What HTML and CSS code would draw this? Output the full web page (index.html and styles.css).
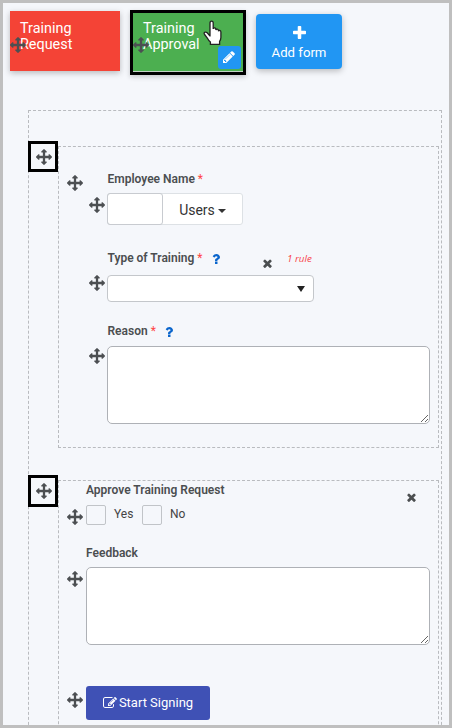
FILE: index.html
```html
<!DOCTYPE html>
<html lang="en">
<head>
<meta charset="utf-8">
<title>Form builder</title>
<link rel="stylesheet" href="styles.css">
</head>
<body>
<svg class="defs" width="0" height="0">
  <symbol id="move" viewBox="0 0 1792 1792"><path d="M1792 896q0 26-19 45l-256 256q-19 19-45 19t-45-19-19-45v-128h-384v384h128q26 0 45 19t19 45-19 45l-256 256q-19 19-45 19t-45-19l-256-256q-19-19-19-45t19-45 45-19h128v-384h-384v128q0 26-19 45t-45 19-45-19l-256-256q-19-19-19-45t19-45l256-256q19-19 45-19t45 19 19 45v128h384v-384h-128q-26 0-45-19t-19-45 19-45l256-256q19-19 45-19t45 19l256 256q19 19 19 45t-19 45-45 19h-128v384h384v-128q0-26 19-45t45-19 45 19l256 256q19 19 19 45z"/></symbol>
  <symbol id="times" viewBox="302 302 1188 1252"><path d="M1490 1322q0 40-28 68l-136 136q-28 28-68 28t-68-28l-294-294-294 294q-28 28-68 28t-68-28l-136-136q-28-28-28-68t28-68l294-294-294-294q-28-28-28-68t28-68l136-136q28-28 68-28t68 28l294 294 294-294q28-28 68-28t68 28l136 136q28 28 28 68t-28 68l-294 294 294 294q28 28 28 68z"/></symbol>
  <symbol id="question" viewBox="380 256 1030 1280"><path d="M1088 1256v240q0 16-12 28t-28 12h-240q-16 0-28-12t-12-28v-240q0-16 12-28t28-12h240q16 0 28 12t12 28zm316-600q0 54-15.5 101t-35 76.5-55 59.5-57.5 43.5-61 35.5q-41 23-68.5 65t-27.5 67q0 17-12 32.5t-28 15.5h-240q-15 0-25.5-18.5t-10.5-37.5v-45q0-83 65-156.5t143-108.5q59-27 84-56t25-76q0-42-46.5-74t-107.5-32q-65 0-108 29-35 25-107 115-13 16-31 16-12 0-25-8l-164-125q-13-10-15.5-25t5.5-28q160-266 464-266 80 0 161 31t146 83 106 127.5 41 158.5z"/></symbol>
</svg>
<div class="page">
  <header class="tabs">
    <div class="tab tab-red">
      Training<br>Request
      <svg class="icon-move tab-move"><use href="#move"/></svg>
    </div>
    <div class="tab-selected">
      <div class="tab tab-green">
        Training<br>Approval
        <svg class="icon-move tab-move"><use href="#move"/></svg>
        <span class="edit"><svg viewBox="0 0 1792 1792" width="14" height="14"><path d="M491 1536l91-91-235-235-91 91v107h128v128h107zm523-928q0-22-22-22-10 0-17 7l-542 542q-7 7-7 17 0 22 22 22 10 0 17-7l542-542q7-7 7-17zm-54-192l416 416-832 832h-416v-416zm683 96q0 53-37 90l-166 166-416-416 166-165q36-38 90-38 53 0 91 38l235 234q37 39 37 91z"/></svg></span>
        <svg class="cursor" viewBox="0 0 19 26"><path d="M7 16.5V3.2Q7 1.2 8.6 1.2T10.2 3.2V9Q10.4 7.8 11.6 7.9T12.9 9.4V10Q13.2 8.9 14.3 9.1T15.5 10.6V11.2Q15.8 10.2 16.8 10.4T17.9 12V17.5Q17.9 19.5 16.6 21.3V24.4H7.4V22Q5.5 20.5 4.3 18L1.6 14.5Q.6 13 1.7 12.3T4.2 12.8L7 16Z"/></svg>
      </div>
    </div>
    <div class="add">
      <svg viewBox="192 128 1408 1408" width="13" height="13"><path d="M1600 736v192q0 40-28 68t-68 28h-416v416q0 40-28 68t-68 28h-192q-40 0-68-28t-28-68v-416h-416q-40 0-68-28t-28-68v-192q0-40 28-68t68-28h416v-416q0-40 28-68t68-28h192q40 0 68 28t28 68v416h416q40 0 68 28t28 68z"/></svg>
      <span>Add form</span>
    </div>
  </header>
  <main class="canvas">
    <section class="section first">
      <div class="grip"><svg class="icon-move"><use href="#move"/></svg></div>
      <div class="panel">
        <svg class="icon-move panel-move"><use href="#move"/></svg>
        <div class="fields">
          <div class="field employee">
            <div class="label">Employee Name <b class="req">*</b></div>
            <div class="row">
              <svg class="icon-move"><use href="#move"/></svg>
              <div class="picker"><span class="picker-input"></span><span class="picker-button">Users <i class="caret"></i></span></div>
            </div>
          </div>
          <div class="field type">
            <div class="label">Type of Training <b class="req">*</b> <svg class="help"><use href="#question"/></svg>
              <svg class="close"><use href="#times"/></svg><em class="rule">1 rule</em></div>
            <div class="row">
              <svg class="icon-move"><use href="#move"/></svg>
              <div class="select"><i class="arrow"></i></div>
            </div>
          </div>
          <div class="field reason">
            <div class="label">Reason <b class="req">*</b> <svg class="help"><use href="#question"/></svg></div>
            <div class="row">
              <svg class="icon-move"><use href="#move"/></svg>
              <textarea class="area"></textarea>
            </div>
          </div>
        </div>
      </div>
    </section>
    <section class="section second">
      <div class="grip"><svg class="icon-move"><use href="#move"/></svg></div>
      <div class="panel">
        <div class="fields">
          <div class="field approve">
            <div class="label">Approve Training Request <svg class="close"><use href="#times"/></svg></div>
            <div class="row">
              <svg class="icon-move"><use href="#move"/></svg>
              <div class="options">
                <span class="check"></span><span class="yes">Yes</span>
                <span class="check"></span><span>No</span>
              </div>
            </div>
          </div>
          <div class="field feedback">
            <div class="label">Feedback</div>
            <div class="row">
              <svg class="icon-move"><use href="#move"/></svg>
              <textarea class="area"></textarea>
            </div>
          </div>
          <div class="field sign">
            <div class="row">
              <svg class="icon-move"><use href="#move"/></svg>
              <div class="button"><svg viewBox="0 0 1792 1792" width="14" height="14"><path d="M888 1184l116-116-152-152-116 116v56h96v96h56zm440-720q-16-16-33 1l-350 350q-17 17-1 33t33-1l350-350q17-17 1-33zm80 594v190q0 119-84.5 203.5t-203.5 84.5h-832q-119 0-203.5-84.5t-84.5-203.5v-832q0-119 84.5-203.5t203.5-84.5h832q63 0 117 25 15 7 18 23 3 17-9 29l-49 49q-14 14-32 8-23-6-45-6h-832q-66 0-113 47t-47 113v832q0 66 47 113t113 47h832q66 0 113-47t47-113v-126q0-13 9-22l64-64q15-15 35-7t20 29zm-96-738l288 288-672 672h-288v-288zm444 132l-92 92-288-288 92-92q28-28 68-28t68 28l152 152q28 28 28 68t-28 68z"/></svg><span>Start Signing</span></div>
            </div>
          </div>
        </div>
      </div>
    </section>
  </main>
</div>
</body>
</html>
```
FILE: styles.css
```css
* { box-sizing: border-box; }
body { margin: 0; font-family: Roboto, "Liberation Sans", sans-serif; color: #444; }
svg { display: block; flex: none; fill: currentColor; }
.defs { position: absolute; }
.page { height: 728px; border: 3px solid #bfbfbf; background: #f5f7fb; overflow: hidden; }

.tabs { display: flex; align-items: flex-start; height: 107px; padding: 7px 0 0 7px; }
.tab { position: relative; width: 110px; padding: 10px 10px 0; color: #fff; font-size: 14.4px; line-height: 16px; }
.tab-red { height: 60px; margin-top: 1px; background: #f44336; box-shadow: 0 2px 6px rgba(0,0,0,.25); }
.tab-selected { width: 116px; height: 65px; margin-left: 10px; border: 3px solid #000; background: #c3d2c5; box-shadow: 0 2px 5px rgba(0,0,0,.2); }
.tab-green { height: 58px; padding-top: 8px; background: #4caf50; }
.icon-move { width: 16px; height: 16px; color: #4c4f52; }
.tab-move { position: absolute; left: 0; top: 26px; }
.tab-green .tab-move { top: 24px; }
.edit { position: absolute; right: 2px; bottom: 2px; width: 23px; height: 23px; border-radius: 3px; background: #2196f3; display: flex; align-items: center; justify-content: center; }
.edit svg { margin: -1px 0 0 -1px; }
.cursor { position: absolute; left: 70px; top: 7px; width: 19px; height: 26px; fill: #fff; stroke: #222; stroke-width: 1.3; }
.add { display: flex; flex-direction: column; align-items: center; width: 86px; height: 55px; margin: 4px 0 0 10px; padding-top: 12px; gap: 5px; border-radius: 4px; background: #2196f3; color: #fff; font-size: 13.2px; line-height: 17px; box-shadow: 0 2px 6px rgba(0,0,0,.25); }

.canvas { width: 414px; height: 640px; margin-left: 25px; border: 1px dashed #b9bbbf; }
.section { display: flex; align-items: flex-start; margin: 30px 0 0 -1px; }
.grip { width: 30px; height: 31px; border: 3px solid #000; display: flex; align-items: center; justify-content: center; padding-left: 2px; }
.panel { display: flex; align-items: flex-start; width: 381px; height: 302px; margin-top: 5px; border: 1px dashed #b9bbbf; }
.panel-move { margin: 28px 0 0 8px; }
.second { margin-top: 27px; }
.second .grip { height: 32px; }
.second .panel { height: 400px; }
.fields { flex: 1; }
.first .fields { margin-left: 5px; padding-top: 25px; }
.label { display: flex; align-items: center; height: 14px; font-size: 12px; font-weight: 600; line-height: 14px; color: #4b4e50; white-space: pre; }
.first .label { padding-left: 19.5px; }
.second .label { padding-left: 27px; }
.row { display: flex; align-items: flex-start; }
.first .row { gap: 2.5px; padding-left: .5px; }
.second .row { gap: 3px; padding-left: 8px; }
.req { color: #f44; font-weight: 400; }
.help { width: 8px; height: 10px; margin: 2px 0 0 9.5px; color: #0a65cc; }
.close { width: 9px; height: 9px; }
.rule { margin-left: 14.5px; color: #f8424a; font: italic 9.8px "Open Sans", sans-serif; }

.picker { display: flex; width: 136px; height: 32px; border: 1px solid #dde1e5; border-radius: 3px; background: #fff; }
.picker-input { width: 56px; margin: -1px; border: 1px solid #c8cbd0; border-radius: 3px; }
.picker-button { display: flex; align-items: center; justify-content: center; flex: 1; gap: 3px; padding: 2px 0 0 1px; color: #333; font-size: 14px; }
.caret { border: 4px solid transparent; border-top-color: #333; border-bottom: 0; margin-top: 1px; }
.select { display: flex; align-items: center; justify-content: flex-end; width: 207px; height: 27px; padding-right: 8px; border: 1px solid #c4c7cb; border-radius: 4px; background: #fff; }
.arrow { border: 4px solid transparent; border-top: 6px solid #222; border-bottom: 0; }
.area { display: block; width: 323px; height: 78px; margin: 0; border: 1px solid #aeb1b6; border-radius: 5px; background: #fff; resize: vertical; outline: 0; }

.employee .row { margin-top: 7px; }
.employee .icon-move { margin-top: 4px; }
.type { margin-top: 26px; }
.type .close { margin: 11px 0 0 43.5px; }
.type .row { margin-top: 10px; }
.reason { margin-top: 22px; }
.reason .row { margin-top: 8px; }
.reason .icon-move { margin-top: 2px; }
.approve { padding-top: 2px; }
.approve .close { margin: 15px 22px 0 auto; }
.approve .row { margin-top: 8px; }
.approve .icon-move { margin-top: 4px; }
.options { display: flex; font-size: 12px; line-height: 18px; }
.check { width: 20px; height: 20px; margin-right: 8px; border: 1px solid #c1c4c8; border-radius: 2px; }
.yes { width: 28px; }
.feedback { margin-top: 21px; }
.feedback .row { margin-top: 7px; }
.feedback .icon-move { margin-top: 4px; }
.second .area { width: 344px; }
.sign { margin-top: 41px; }
.sign .icon-move { margin-top: 6px; }
.button { display: flex; align-items: center; justify-content: center; gap: 2px; width: 124px; height: 34px; padding-bottom: 1px; border-radius: 3px; background: #3f51b5; color: #fff; font-size: 13px; }
```
